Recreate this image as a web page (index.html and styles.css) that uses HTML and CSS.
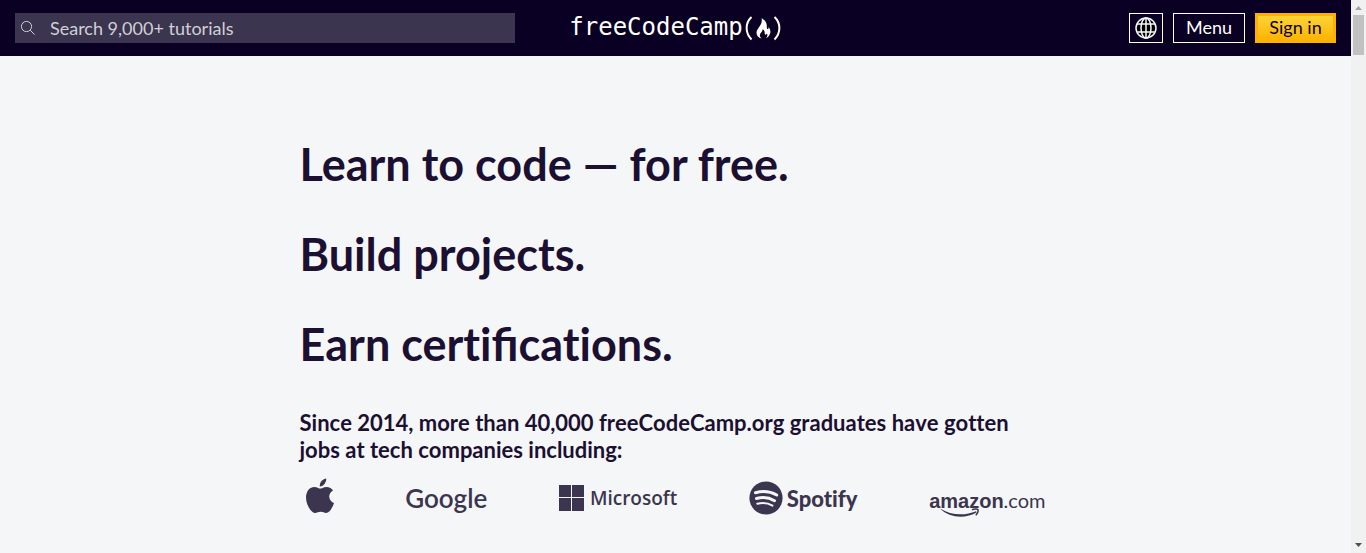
FILE: index.html
```html
<!DOCTYPE html>
<html lang="en">
<head>
<meta charset="utf-8">
<title>Learn to Code — For Free</title>
<link rel="stylesheet" href="styles.css">
</head>
<body>
<div class="viewport">
  <div class="page">
    <header class="site-header">
      <form class="search" role="search">
        <svg class="search-icon" viewBox="0 0 16 16" aria-hidden="true"><circle cx="6.5" cy="6.5" r="5.1"/><path d="M10.2 10.2 14.6 14.6"/></svg>
        <input class="search-input" type="search" aria-label="Search" placeholder="Search 9,000+ tutorials">
      </form>
      <a class="brand" href="#" aria-label="freeCodeCamp">
        <span class="brand-name">freeCodeCamp</span>
        <svg class="brand-mark" viewBox="0 0 39 26" aria-hidden="true">
          <path class="paren" d="M8.500 2C2 8 2 18 8.500 24.500M31.500 2C38 8 38 18 31.500 24.500"/>
          <path class="flame" d="M18.600 3.200c4 2 5.500 5 5.200 8.300-.1 1.600.3 2.500 1 2.600.9 0 1-1.100.5-2.300 2.300 2.700 2.600 5 1.600 7.300-.7 1.700-2 3.400-3.900 4.100 1.500-1.700 1.900-3.200.8-4.700-.4 1-1 1.300-1.600 1.100-.9-.4-.2-1.800-.8-3.300-.4-1.100-1-1.700-1.800-2.100.2 2.400-2.300 3.300-2.700 5.600-.2 1.400.4 2.700 1.800 3.700-3.300-.8-5.200-2.900-5.200-5.800 0-4.700 6.600-7.400 5.100-14.500z"/>
        </svg>
      </a>
      <nav class="actions" aria-label="Main">
        <button class="btn btn-icon" type="button" aria-label="Change language">
          <svg class="globe" viewBox="0 0 22 22" aria-hidden="true"><circle class="globe-fill" cx="11" cy="11" r="10"/><ellipse cx="11" cy="11" rx="5" ry="10"/><path d="M11 1v20M2 7h18M2 15h18"/></svg>
        </button>
        <button class="btn btn-menu" type="button">Menu</button>
        <a class="btn btn-signin" href="#">Sign in</a>
      </nav>
    </header>
    <main class="landing">
      <h1 class="headline">Learn to code — for free.</h1>
      <p class="headline">Build projects.</p>
      <p class="headline">Earn certi<span class="ligature">fi</span>cations.</p>
      <h2 class="subhead">Since 2014, more than 40,000 freeCodeCamp.org graduates have gotten jobs at tech companies including:</h2>
      <ul class="companies">
        <li class="company">
          <svg class="apple" viewBox="0 0 28 36" role="img" aria-label="Apple"><path d="M20.200.500c.3 2.400-.8 4.400-2.100 5.900-1.200 1.300-2.800 2.100-4.300 2 -.2-2.200.7-4.200 2-5.600C17 1.500 18.700.7 20.200.500zM14.400 10.600c1.500 0 3.300-1.700 6.100-1.700 2.800 0 5.200 1.400 6.500 3.500-5.700 3.500-4.600 10.500 1 12.700-1.300 3.800-4.200 9.900-7.900 9.900-2 0-3-1.200-5.400-1.200-2.500 0-3.600 1.200-5.500 1.200C5.200 35 0 27.200 0 19.600 0 12.700 4 9 8.300 8.900c2.700 0 4.300 1.700 6.100 1.700z"/></svg>
        </li>
        <li class="company google">Google</li>
        <li class="company microsoft">
          <svg class="windows" viewBox="0 0 25 26" aria-hidden="true"><path d="M0 0h12v12H0zM13 0h12v12H13zM0 13h12v13H0zM13 13h12v13H13z"/></svg>
          <span>Microsoft</span>
        </li>
        <li class="company spotify">
          <svg class="spotify-mark" viewBox="0 0 34 34" aria-hidden="true"><circle cx="17" cy="17" r="16.600"/><path class="wave wave-l" d="M6.500 11.800c7-2 15-1.300 21.200 2.200"/><path class="wave wave-m" d="M7.500 17.500c6.200-1.800 12.700-1 18 2.200"/><path class="wave wave-s" d="M8.300 22.700c5.200-1.300 10.700-.8 15.200 1.900"/></svg>
          <span>Spotify</span>
        </li>
        <li class="company amazon">
          <span class="amazon-text"><b>amazon</b><span class="dotcom">.com</span></span>
          <svg class="smile" viewBox="0 0 114 10" aria-hidden="true"><path d="M10 .500C21 7.500 35 8 46 3.200l.8 1C36 10.800 20 10.500 10 .500z"/><path class="tip" d="M42 1.700c2.500-1.100 5.500-1 6 0 .4 1.100-.6 3.700-2.200 5.500"/></svg>
        </li>
      </ul>
    </main>
  </div>
  <div class="scrollbar" aria-hidden="true">
    <svg class="arrow arrow-up" viewBox="0 0 15 15"><path d="M4 10h7L7.500 6z"/></svg>
    <span class="thumb"></span>
    <svg class="arrow arrow-down" viewBox="0 0 15 15"><path d="M4 5h7L7.500 9z"/></svg>
  </div>
</div>
</body>
</html>
```
FILE: styles.css
```css
* { box-sizing: border-box; }
body {
  margin: 0;
  background: #f5f6f7;
  color: #1b1032;
  font-family: Lato, sans-serif;
  font-size: 18px;
}
.viewport { display: flex; height: 100vh; }
.page { flex: 1; min-width: 0; overflow: hidden; }

.site-header {
  display: grid;
  grid-template-columns: 1fr auto 1fr;
  align-items: center;
  height: 56px;
  padding: 0 15px;
  background: #0a0023;
}
.search {
  display: flex;
  align-items: center;
  width: 100%;
  max-width: 500px;
  height: 30px;
  background: #3b3550;
}
.search-icon {
  width: 16px;
  height: 16px;
  margin: 0 14px 0 5px;
  fill: none;
  stroke: #d0d0d5;
  stroke-width: 1;
}
.search-input {
  flex: 1;
  min-width: 0;
  height: 30px;
  padding: 0;
  border: 0;
  outline: 0;
  background: transparent;
  color: #d0d0d5;
  font: 18px/30px Lato, sans-serif;
}
.search-input::placeholder { color: #d0d0d5; opacity: 1; }

.brand {
  display: flex;
  align-items: center;
  color: #fff;
  text-decoration: none;
}
.brand-name { padding-bottom: 2px; font: 24px/28px "DejaVu Sans Mono", monospace; }
.brand-mark { width: 39px; height: 26px; }
.paren { fill: none; stroke: #fff; stroke-width: 2; }
.flame { fill: #fff; }

.actions { display: flex; justify-content: flex-end; gap: 10px; }
.btn {
  display: flex;
  align-items: center;
  justify-content: center;
  height: 30px;
  padding: 0 12px 2px;
  border: 1px solid #fff;
  border-radius: 0;
  background: #0a0023;
  color: #fff;
  font: 18px/22px Lato, sans-serif;
  text-decoration: none;
}
.btn-icon { width: 34px; padding: 0; }
.globe { width: 22px; height: 22px; fill: none; stroke: #f5f6f7; stroke-width: 1.500; }
.globe-fill { fill: #000; }
.btn-signin {
  min-width: 81px;
  padding: 0 11px 2px;
  border: 3px solid #ffb000;
  background: linear-gradient(#fbd437, #ffb400);
  color: #0a0023;
}

.landing { max-width: 752px; margin: 0 auto; padding-top: 83px; }
.headline {
  margin: 0 0 40px;
  font-size: 45px;
  font-weight: 700;
  font-variant-ligatures: none;
  line-height: 50px;
}
.ligature { font-variant-ligatures: normal; }
.subhead {
  margin: 0;
  font-size: 22px;
  font-weight: 700;
  font-variant-ligatures: none;
  font-kerning: none;
  line-height: 27px;
}
.companies {
  display: flex;
  justify-content: space-between;
  margin: 0;
  padding: 15px 6px;
  list-style: none;
  color: #3b3550;
  fill: #3b3550;
}
.company { display: flex; align-items: center; height: 40px; }
.apple { width: 28px; height: 36px; align-self: flex-start; }
.google { font: 600 26px/40px Lato, sans-serif; }
.microsoft { gap: 6px; font: 600 19px/40px "Open Sans", sans-serif; }
.windows { width: 25px; height: 26px; }
.spotify { gap: 4px; font-size: 22px; font-weight: 900; font-variant-ligatures: none; }
.spotify-mark { width: 34px; height: 34px; }
.wave { fill: none; stroke: #f5f6f7; stroke-linecap: round; }
.wave-l { stroke-width: 3; }
.wave-m { stroke-width: 3; }
.wave-s { stroke-width: 2; }
.amazon { flex-direction: column; justify-content: flex-end; }
.amazon-text { font: 20px/14px "Liberation Sans", sans-serif; }
.dotcom { font-family: Lato, sans-serif; font-weight: 400; }
.smile { width: 114px; height: 10px; }
.tip { fill: none; stroke: #3b3550; stroke-width: 1.500; }

.scrollbar {
  display: flex;
  flex-direction: column;
  align-items: center;
  width: 15px;
  background: #f1f1f1;
}
.arrow { width: 15px; height: 15px; }
.arrow-up { fill: #a3a3a3; }
.arrow-down { margin-top: auto; fill: #505050; }
.thumb { width: 11px; height: 40px; background: #c1c1c1; }
```
